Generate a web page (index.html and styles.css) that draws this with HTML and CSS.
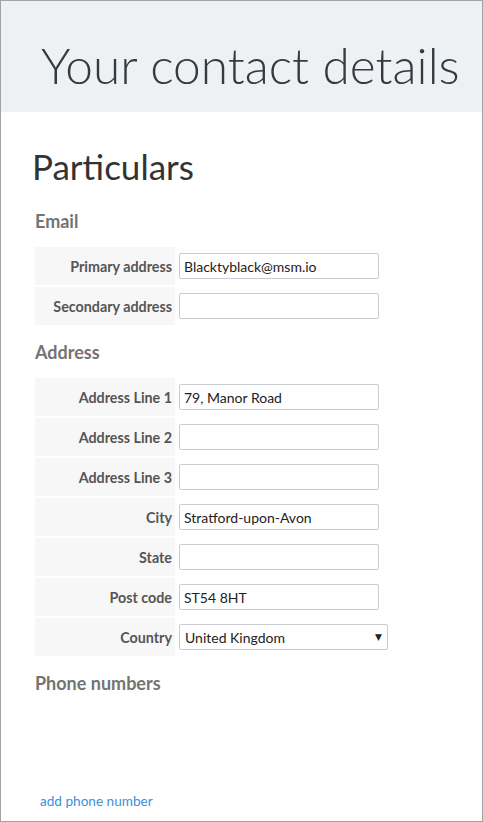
FILE: index.html
```html
<!DOCTYPE html>
<html lang="en">
<head>
<meta charset="utf-8">
<title>Your contact details</title>
<link rel="stylesheet" href="styles.css">
</head>
<body>
<div class="page">
  <header class="banner">
    <h1 class="banner-title">Your contact details</h1>
  </header>
  <main class="content">
    <h2 class="page-heading">Particulars</h2>

    <h3 class="section-heading">Email</h3>
    <div class="field-table">
      <div class="field-row">
        <label class="field-label">Primary address</label>
        <div class="field-control"><input class="text-input" type="text" value="Blacktyblack@msm.io"></div>
      </div>
      <div class="field-row">
        <label class="field-label">Secondary address</label>
        <div class="field-control"><input class="text-input" type="text" value=""></div>
      </div>
    </div>

    <h3 class="section-heading">Address</h3>
    <div class="field-table">
      <div class="field-row">
        <label class="field-label">Address Line 1</label>
        <div class="field-control"><input class="text-input" type="text" value="79, Manor Road"></div>
      </div>
      <div class="field-row">
        <label class="field-label">Address Line 2</label>
        <div class="field-control"><input class="text-input" type="text" value=""></div>
      </div>
      <div class="field-row">
        <label class="field-label">Address Line 3</label>
        <div class="field-control"><input class="text-input" type="text" value=""></div>
      </div>
      <div class="field-row">
        <label class="field-label">City</label>
        <div class="field-control"><input class="text-input" type="text" value="Stratford-upon-Avon"></div>
      </div>
      <div class="field-row">
        <label class="field-label">State</label>
        <div class="field-control"><input class="text-input" type="text" value=""></div>
      </div>
      <div class="field-row">
        <label class="field-label">Post code</label>
        <div class="field-control"><input class="text-input" type="text" value="ST54 8HT"></div>
      </div>
      <div class="field-row">
        <label class="field-label">Country</label>
        <div class="field-control">
          <div class="select-box">
            <span class="select-value">United Kingdom</span>
            <span class="select-arrow">&#9660;</span>
          </div>
        </div>
      </div>
    </div>

    <h3 class="section-heading">Phone numbers</h3>
    <div class="phone-list"></div>
    <a class="add-link" href="#">add phone number</a>
  </main>
</div>
</body>
</html>
```
FILE: styles.css
```css
html, body {
  margin: 0;
  padding: 0;
}
body {
  font-family: Lato, "Open Sans", sans-serif;
  color: #333;
  background: #fff;
}
.page {
  box-sizing: border-box;
  width: 483px;
  height: 822px;
  border: 1px solid #a3a3a3;
  overflow: hidden;
  display: flex;
  flex-direction: column;
}
.banner {
  background: #edf1f4;
  padding: 34px 0 17px 40px;
}
.banner-title {
  margin: 0;
  font-size: 49.6px;
  line-height: 60px;
  font-weight: 300;
  color: #333a40;
  white-space: nowrap;
}
.content {
  padding: 33px 0 0 34px;
  display: flex;
  flex-direction: column;
  flex: 1;
}
.page-heading {
  margin: 0 0 0 -3px;
  font-size: 35px;
  line-height: 42px;
  font-weight: 400;
  color: #333;
}
.section-heading {
  margin: 23px 0 15px 0;
  font-size: 18px;
  line-height: 22px;
  font-weight: 700;
  color: #737373;
}
.field-table + .section-heading {
  margin-top: 16px;
}
.field-table {
  display: flex;
  flex-direction: column;
  gap: 2px;
}
.field-row {
  display: flex;
  align-items: center;
  gap: 4px;
  height: 38px;
}
.field-label {
  box-sizing: border-box;
  width: 140px;
  height: 38px;
  display: flex;
  align-items: center;
  justify-content: flex-end;
  padding-right: 3px;
  background: #f7f7f7;
  font-size: 14.3px;
  font-weight: 700;
  color: #555;
  white-space: nowrap;
}
.field-control {
  display: flex;
  align-items: center;
}
.text-input {
  box-sizing: border-box;
  width: 200px;
  height: 26px;
  margin: 0;
  padding: 0 4px;
  border: 1px solid #c9cdd2;
  border-radius: 2px;
  font-family: Lato, sans-serif;
  font-size: 14px;
  color: #222;
  background: #fff;
  outline: none;
}
.select-box {
  box-sizing: border-box;
  width: 209px;
  height: 26px;
  display: flex;
  align-items: center;
  justify-content: space-between;
  padding: 0 5px 0 5px;
  border: 1px solid #c9cdd2;
  border-radius: 2px;
  background: #fff;
  font-size: 14px;
  color: #222;
}
.select-arrow {
  font-size: 9px;
  color: #222;
  font-family: "DejaVu Sans", sans-serif;
}
.phone-list {
  flex: 1;
}
.add-link {
  align-self: flex-start;
  margin: 0 0 11px 5px;
  font-size: 13.6px;
  line-height: 17px;
  color: #3d8fd9;
  text-decoration: none;
}
```
